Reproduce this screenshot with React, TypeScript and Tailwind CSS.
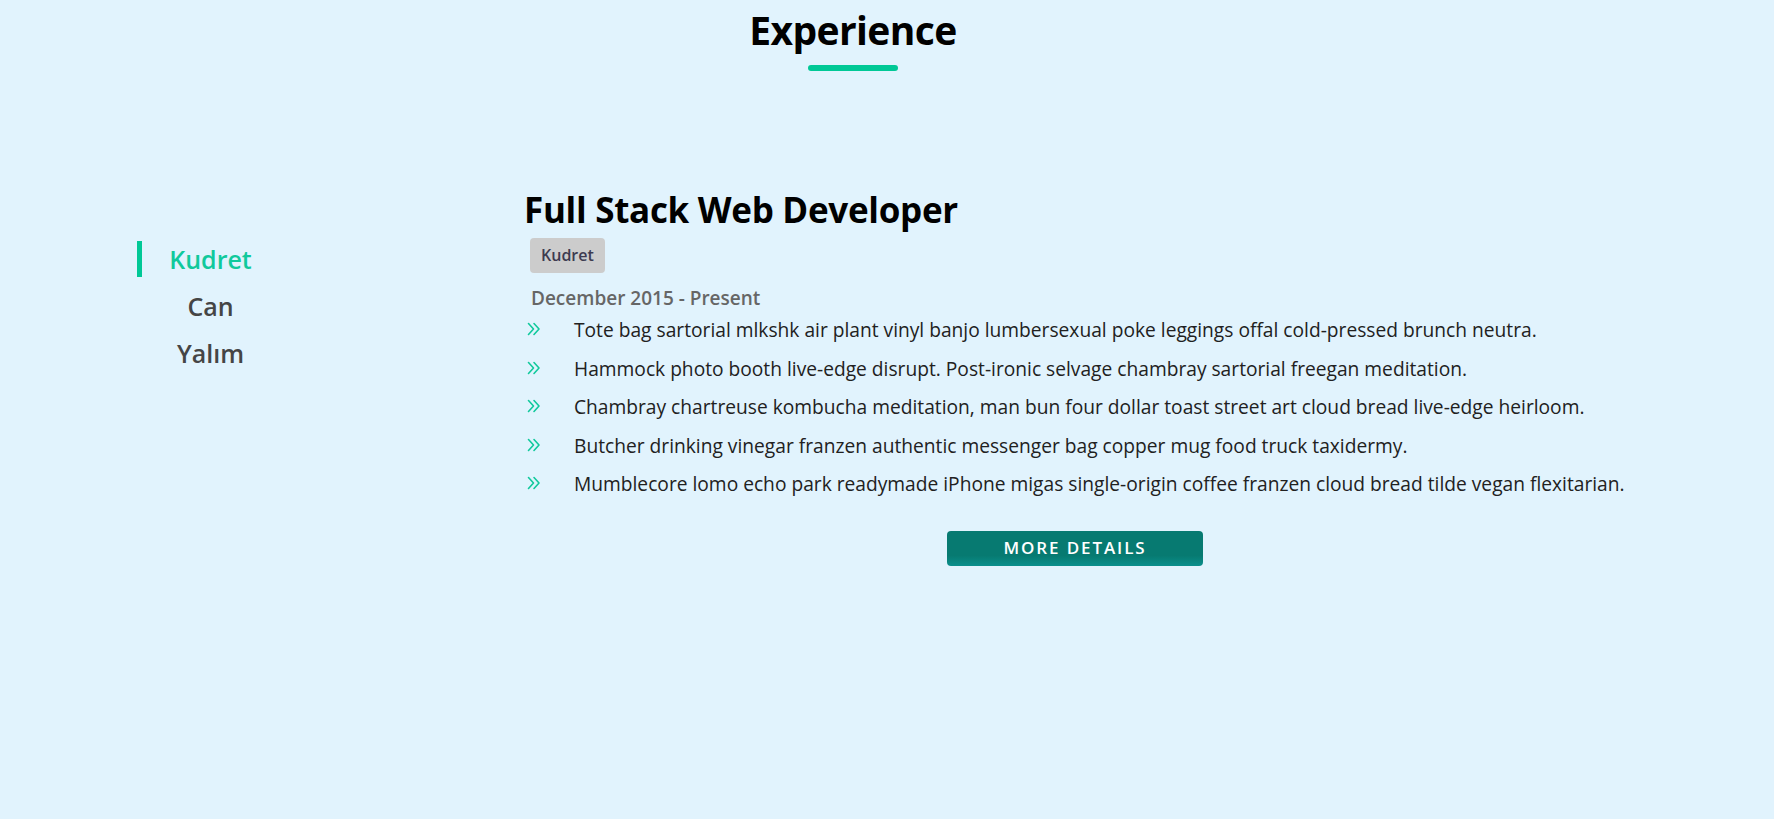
const jobs = [
  "Tote bag sartorial mlkshk air plant vinyl banjo lumbersexual poke leggings offal cold-pressed brunch neutra.",
  "Hammock photo booth live-edge disrupt. Post-ironic selvage chambray sartorial freegan meditation.",
  "Chambray chartreuse kombucha meditation, man bun four dollar toast street art cloud bread live-edge heirloom.",
  "Butcher drinking vinegar franzen authentic messenger bag copper mug food truck taxidermy.",
  "Mumblecore lomo echo park readymade iPhone migas single-origin coffee franzen cloud bread tilde vegan flexitarian.",
];

const tabs = ["Kudret", "Can", "Yalım"];

function DoubleChevron() {
  return (
    <svg width="14" height="14" viewBox="0 0 14 14" fill="none" stroke="#10c99c" strokeWidth="1.6" strokeLinecap="round" strokeLinejoin="round">
      <path d="M1.5 1.5 L6.5 7 L1.5 12.5" />
      <path d="M7 1.5 L12 7 L7 12.5" />
    </svg>
  );
}

export default function App() {
  return (
    <div className="min-h-screen bg-[#e1f3fd] font-['Open_Sans',sans-serif]">
      <div className="pr-[68px] pt-[3px] flex flex-col items-center">
        <h2 className="text-[39px] leading-[54px] font-bold text-black tracking-[-0.6px]">Experience</h2>
        <div className="w-[90px] h-[6px] rounded-full bg-[#00c896] mt-[8px]" />
      </div>

      <div className="flex pl-[137px] mt-[116px]">
        <ul className="w-[142px] flex flex-col gap-[11px] mt-[54px]">
          {tabs.map((t, i) => (
            <li
              key={t}
              className={
                i === 0
                  ? "h-[36px] border-l-[5px] border-[#00c896] text-[#10c99c] text-[25px] leading-[36px] font-semibold text-center"
                  : "h-[36px] border-l-[5px] border-transparent text-[#454545] text-[25px] leading-[36px] font-semibold text-center"
              }
            >
              {t}
            </li>
          ))}
        </ul>

        <div className="ml-[247px] w-[1098px] flex flex-col">
          <h3 className="text-[35px] leading-[46px] font-bold text-black -ml-[2px] tracking-[-0.3px]">Full Stack Web Developer</h3>
          <div className="mt-[5px] ml-[4px]">
            <span className="inline-block bg-[#cccccc] rounded-[4px] px-[11px] h-[35px] leading-[35px] text-[16px] font-semibold text-[#3d3b50]">Kudret</span>
          </div>
          <p className="mt-[12px] ml-[5px] text-[19px] leading-[26px] font-semibold text-[#666666]">December 2015 - Present</p>
          <ul className="mt-[4px] flex flex-col">
            {jobs.map((j) => (
              <li key={j} className="flex items-start h-[38.5px]">
                <span className="w-[48px] pt-[7px] pl-[1px] shrink-0">
                  <DoubleChevron />
                </span>
                <span className="text-[19.2px] leading-[30px] text-[#212121] whitespace-nowrap">{j}</span>
              </li>
            ))}
          </ul>
          <div className="flex justify-center mt-[23px]">
            <button className="w-[256px] h-[35px] rounded-[4px] bg-gradient-to-b from-[#077a71] from-70% to-[#0a8f8c] text-white text-[17px] font-semibold tracking-[1.9px]">
              MORE DETAILS
            </button>
          </div>
        </div>
      </div>
    </div>
  );
}
